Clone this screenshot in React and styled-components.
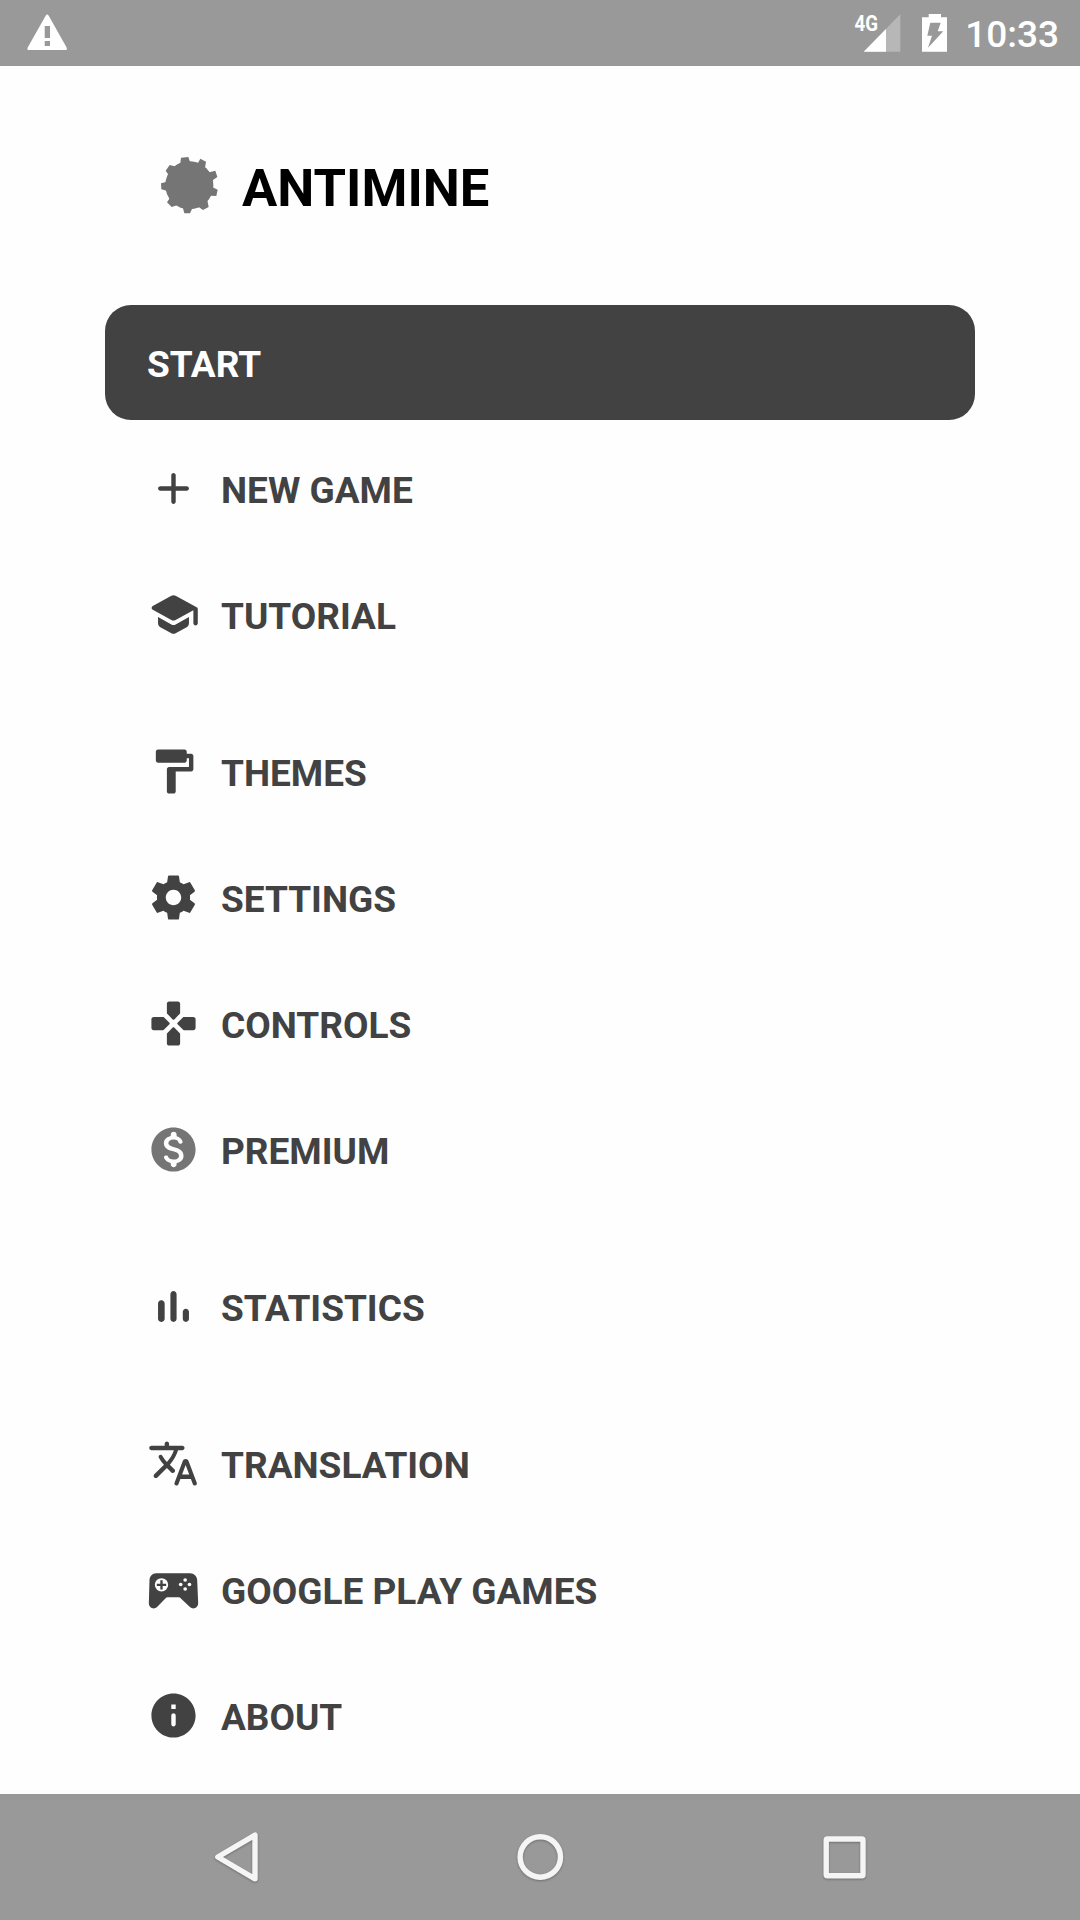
import React from "react";
import styled, { createGlobalStyle } from "styled-components";

const GlobalStyle = createGlobalStyle`
  * { box-sizing: border-box; }
  body { margin: 0; background: #fefefe; }
`;

const Screen = styled.div`
  width: 1080px;
  height: 1920px;
  display: flex;
  flex-direction: column;
  background: #fefefe;
  color: #424242;
  font-family: Roboto, "Noto Sans", sans-serif;
  overflow: hidden;
`;

const StatusBar = styled.header`
  flex: none;
  height: 66px;
  display: flex;
  align-items: center;
  padding: 0 21px 0 24px;
  background: #999;
  color: #fff;
`;

const StatusIcon = styled.svg`
  display: block;
  flex: none;
  height: 66px;
  width: ${(p) => p.$w}px;
  margin-left: ${(p) => p.$ml || 0}px;
`;

const Spacer = styled.div`
  flex: 1;
`;

const Clock = styled.time`
  width: 94px;
  margin-left: 15px;
  text-align: right;
  font-size: 37px;
  font-weight: 500;
  line-height: 66px;
  padding-top: 4px;
`;

const Main = styled.main`
  flex: 1;
  min-height: 0;
  padding: 0 105px;
`;

const Brand = styled.div`
  height: 233px;
  display: flex;
  align-items: center;
  padding: 3px 0 0 53px;
  gap: 21px;
`;

const BrandMark = styled.svg`
  display: block;
  width: 63px;
  height: 63px;
  margin-top: 2px;
  fill: #757575;
`;

const Title = styled.h1`
  margin: 8px 0 0;
  color: #000;
  font-size: 52.5px;
  line-height: 62px;
  font-weight: 700;
`;

const Group = styled.nav`
  display: flex;
  flex-direction: column;
  margin-bottom: 31px;
`;

const Row = styled.button`
  height: ${(p) => (p.$filled ? 115 : 126)}px;
  margin: ${(p) => (p.$filled ? "6px 0 5px" : "0")};
  padding: 0 42px;
  display: flex;
  align-items: center;
  gap: 21px;
  border: 0;
  border-radius: 26px;
  background: ${(p) => (p.$filled ? "#424242" : "transparent")};
  color: ${(p) => (p.$filled ? "#fff" : "#424242")};
  font: 700 37px/44px Roboto, "Noto Sans", sans-serif;
  text-align: left;
`;

const Glyph = styled.svg`
  display: block;
  flex: none;
  width: 53px;
  height: 53px;
  fill: ${(p) => p.$tint || "currentColor"};
`;

const Label = styled.span`
  padding-top: 5px;
  white-space: nowrap;
`;

const NavBar = styled.footer`
  flex: none;
  height: 126px;
  display: flex;
  justify-content: center;
  gap: 178px;
  background: #999;
`;

const NavIcon = styled.svg`
  display: block;
  width: 126px;
  height: 126px;
  fill: none;
  stroke: #f5f5f5;
  stroke-width: 5.4;
  stroke-linejoin: round;
  filter: drop-shadow(0 1.5px 1px rgba(0, 0, 0, 0.28));
`;

const paths = {
  add: "M18 13h-5v5c0 .55-.45 1-1 1s-1-.45-1-1v-5H6c-.55 0-1-.45-1-1s.45-1 1-1h5V6c0-.55.45-1 1-1s1 .45 1 1v5h5c.55 0 1 .45 1 1s-.45 1-1 1z",
  school:
    "M5 13.18v2.81c0 .73.4 1.41 1.04 1.76l5 2.73c.6.33 1.32.33 1.92 0l5-2.73c.64-.35 1.04-1.03 1.04-1.76v-2.81l-6.04 3.3c-.6.33-1.32.33-1.92 0L5 13.18zm6.04-9.66l-8.43 4.6c-.69.38-.69 1.38 0 1.76l8.43 4.6c.6.33 1.32.33 1.92 0L21 10.09V16c0 .55.45 1 1 1s1-.45 1-1V9.59c0-.37-.2-.7-.52-.88l-9.52-5.19c-.6-.32-1.32-.32-1.92 0z",
  paint:
    "M18 4V3c0-.55-.45-1-1-1H5c-.55 0-1 .45-1 1v4c0 .55.45 1 1 1h12c.55 0 1-.45 1-1V6h1v4h-9c-.55 0-1 .45-1 1v10c0 .55.45 1 1 1h2c.55 0 1-.45 1-1v-9h7c.55 0 1-.45 1-1V5c0-.55-.45-1-1-1h-2z",
  settings:
    "M19.43 12.98c.04-.32.07-.64.07-.98s-.03-.66-.07-.98l2.11-1.65c.19-.15.24-.42.12-.64l-2-3.46c-.12-.22-.39-.3-.61-.22l-2.49 1c-.52-.4-1.08-.73-1.69-.98l-.38-2.65C14.46 2.18 14.25 2 14 2h-4c-.25 0-.46.18-.49.42l-.38 2.65c-.61.25-1.17.59-1.69.98l-2.49-1c-.23-.09-.49 0-.61.22l-2 3.46c-.13.22-.07.49.12.64l2.11 1.65c-.04.32-.07.65-.07.98s.03.66.07.98l-2.11 1.65c-.19.15-.24.42-.12.64l2 3.46c.12.22.39.3.61.22l2.49-1c.52.4 1.08.73 1.69.98l.38 2.65c.03.24.24.42.49.42h4c.25 0 .46-.18.49-.42l.38-2.65c.61-.25 1.17-.59 1.69-.98l2.49 1c.23.09.49 0 .61-.22l2-3.46c.12-.22.07-.49-.12-.64l-2.11-1.65zM12 15.5c-1.93 0-3.5-1.57-3.5-3.5s1.57-3.5 3.5-3.5 3.5 1.57 3.5 3.5-1.57 3.5-3.5 3.5z",
  controls:
    "M15 7.29V3c0-.55-.45-1-1-1h-4c-.55 0-1 .45-1 1v4.29c0 .13.05.26.15.35l2.5 2.5c.2.2.51.2.71 0l2.5-2.5c.09-.09.14-.21.14-.35zM7.29 9H3c-.55 0-1 .45-1 1v4c0 .55.45 1 1 1h4.29c.13 0 .26-.05.35-.15l2.5-2.5c.2-.2.2-.51 0-.71l-2.5-2.5C7.55 9.05 7.43 9 7.29 9zM9 16.71V21c0 .55.45 1 1 1h4c.55 0 1-.45 1-1v-4.29c0-.13-.05-.26-.15-.35l-2.5-2.5c-.2-.2-.51-.2-.71 0l-2.5 2.5c-.09.09-.14.21-.14.35zm7.35-7.56l-2.5 2.5c-.2.2-.2.51 0 .71l2.5 2.5c.09.09.22.15.35.15H21c.55 0 1-.45 1-1v-4c0-.55-.45-1-1-1h-4.29c-.14 0-.27.05-.36.14z",
  coin: "M12 2C6.48 2 2 6.48 2 12s4.48 10 10 10 10-4.48 10-10S17.52 2 12 2zm1.41 16.09v.58c0 .73-.6 1.33-1.33 1.33h-.01c-.73 0-1.33-.6-1.33-1.33v-.6c-1.33-.28-2.51-1.01-3.01-2.24-.23-.55.2-1.16.8-1.16h.24c.37 0 .67.25.81.6.29.75 1.05 1.27 2.51 1.27 1.96 0 2.4-.98 2.4-1.59 0-.83-.44-1.61-2.67-2.14-2.48-.6-4.18-1.62-4.18-3.67 0-1.72 1.39-2.84 3.11-3.21v-.6c0-.73.6-1.33 1.33-1.33h.01c.73 0 1.33.6 1.33 1.33v.62c1.38.34 2.25 1.2 2.63 2.26.2.55-.22 1.13-.81 1.13h-.26c-.37 0-.67-.26-.77-.62-.23-.76-.86-1.25-2.12-1.25-1.5 0-2.4.68-2.4 1.64 0 .84.65 1.39 2.67 1.91s4.18 1.39 4.18 3.91c-.02 1.83-1.39 2.83-3.13 3.16z",
  chart:
    "M6.4 9.2h.2c.77 0 1.4.63 1.4 1.4v7c0 .77-.63 1.4-1.4 1.4h-.2c-.77 0-1.4-.63-1.4-1.4v-7c0-.77.63-1.4 1.4-1.4zM12 5c.77 0 1.4.63 1.4 1.4v11.2c0 .77-.63 1.4-1.4 1.4-.77 0-1.4-.63-1.4-1.4V6.4c0-.77.63-1.4 1.4-1.4zm5.6 8c.77 0 1.4.63 1.4 1.4v3.2c0 .77-.63 1.4-1.4 1.4-.77 0-1.4-.63-1.4-1.4v-3.2c0-.77.63-1.4 1.4-1.4z",
  translate:
    "M12.65 15.67c.14-.36.05-.77-.23-1.05l-2.09-2.06.03-.03c1.74-1.94 2.98-4.17 3.71-6.53h1.94c.54 0 .99-.45.99-.99v-.02c0-.54-.45-.99-.99-.99H10V3c0-.55-.45-1-1-1s-1 .45-1 1v1H1.99c-.54 0-.99.45-.99.99 0 .55.45.99.99.99h10.18C11.5 7.92 10.44 9.75 9 11.35c-.81-.89-1.49-1.86-2.06-2.88-.16-.29-.45-.47-.78-.47-.69 0-1.13.75-.79 1.35.63 1.13 1.4 2.21 2.3 3.21L3.3 16.87c-.4.39-.4 1.03 0 1.42.39.39 1.02.39 1.42 0L9 14l2.02 2.02c.51.51 1.38.32 1.63-.35zM17.5 10c-.6 0-1.14.37-1.35.94l-3.67 9.8c-.24.61.22 1.26.87 1.26.39 0 .74-.24.88-.61l.89-2.39h4.75l.9 2.39c.14.36.49.61.88.61.65 0 1.11-.65.88-1.26l-3.67-9.8c-.22-.57-.76-.94-1.36-.94zm-1.62 7l1.62-4.33L19.12 17h-3.24z",
  info: "M12 2C6.48 2 2 6.48 2 12s4.48 10 10 10 10-4.48 10-10S17.52 2 12 2zm0 15c-.55 0-1-.45-1-1v-4c0-.55.45-1 1-1s1 .45 1 1v4c0 .55-.45 1-1 1zm1-8h-2V7h2v2z",
};

const groups = [
  [
    { label: "START", filled: true },
    { label: "NEW GAME", icon: "add" },
    { label: "TUTORIAL", icon: "school" },
  ],
  [
    { label: "THEMES", icon: "paint" },
    { label: "SETTINGS", icon: "settings" },
    { label: "CONTROLS", icon: "controls" },
    { label: "PREMIUM", icon: "coin", tint: "#757575" },
  ],
  [{ label: "STATISTICS", icon: "chart" }],
  [
    { label: "TRANSLATION", icon: "translate" },
    { label: "GOOGLE PLAY GAMES", icon: "pad" },
    { label: "ABOUT", icon: "info" },
  ],
];

function GamePad() {
  return (
    <Glyph viewBox="52.5 428 159 159">
      <path d="M80 459h102c12 0 20 9 21 20l3 69c0 16-16 20-24 13l-27-26q-3-4-8-4h-32q-5 0-8 4l-25 26c-8 7-24 3-24-13l2-69c1-11 8-20 20-20z" />
      <circle cx="96" cy="493.5" r="20" fill="#fefefe" />
      <path d="M92.5 479.5h7V490H110v7H99.5v10.5h-7V497H82v-7h10.5z" />
      <g fill="#fefefe">
        <circle cx="167" cy="479" r="5.5" />
        <circle cx="167" cy="506" r="5.5" />
        <circle cx="153.5" cy="492.5" r="5.5" />
        <circle cx="180" cy="492.5" r="5.5" />
      </g>
    </Glyph>
  );
}

function Icon({ name, tint }) {
  if (name === "pad") return <GamePad />;
  return (
    <Glyph viewBox="0 0 24 24" $tint={tint}>
      <path d={paths[name]} />
    </Glyph>
  );
}

export default function App() {
  return (
    <Screen>
      <GlobalStyle />
      <StatusBar>
        <StatusIcon $w={46} viewBox="24 0 46 66">
          <path
            fill="#fff"
            fillRule="evenodd"
            d="M45.8 15.6q1.4-2 2.8 0L66.6 47.5q1.2 2.6-1.6 2.6H29.3q-2.8 0-1.6-2.6zM44.7 26v12h5.3V26zM44.7 41v5h5.3v-5z"
          />
        </StatusIcon>
        <Spacer />
        <StatusIcon $w={50} viewBox="852 0 50 66">
          <path d="M900.3 14.3v37.4h-36.6z" fill="#fff" fillOpacity=".3" />
          <path d="M886 29v22.7h-22.3z" fill="#fff" />
          <text
            x="854.5"
            y="31.4"
            fill="#fff"
            fontFamily="Roboto, sans-serif"
            fontWeight="700"
            fontSize="22"
            textLength="23.5"
            lengthAdjust="spacingAndGlyphs"
          >
            4G
          </text>
        </StatusIcon>
        <StatusIcon $w={30} $ml={18} viewBox="920 0 30 66">
          <path
            fill="#fff"
            fillRule="evenodd"
            d="M928.7 14h12.3v3.3h6v34.4h-25V17.3h6.7zM930.3 22.7l-3 13h4.7l-4 12L943.3 31.3h-5.6l3-8.6z"
          />
        </StatusIcon>
        <Clock>10:33</Clock>
      </StatusBar>
      <Main>
        <Brand>
          <BrandMark viewBox="54 43 189 189">
            <circle cx="148" cy="136.7" r="72" />
            <path d="M123 54L145 52L150 66A71 71 0 0 1 174 70L181 57L198 66L195 84A71 71 0 0 1 208 98L226 93L232 112L218 122A71 71 0 0 1 218 143L233 150L229 169L212 168A71 71 0 0 1 202 182L206 202L189 211L176 202A71 71 0 0 1 157 206L150 221L133 221L129 206A71 71 0 0 1 111 197L95 202L81 188L90 174A71 71 0 0 1 80 153L64 149L63 131L78 127A71 71 0 0 1 86 106L77 93L89 76L104 80A71 71 0 0 1 121 70Z" />
          </BrandMark>
          <Title>ANTIMINE</Title>
        </Brand>
        {groups.map((items, i) => (
          <Group key={i}>
            {items.map((it) => (
              <Row key={it.label} type="button" $filled={it.filled}>
                {it.icon && <Icon name={it.icon} tint={it.tint} />}
                <Label>{it.label}</Label>
              </Row>
            ))}
          </Group>
        ))}
      </Main>
      <NavBar>
        <NavIcon viewBox="173 1794 126 126">
          <path d="M255 1835.2v43.6L217.8 1857z" />
        </NavIcon>
        <NavIcon viewBox="477.3 1794 126 126">
          <circle cx="540.6" cy="1857" r="20.2" />
        </NavIcon>
        <NavIcon viewBox="781 1794 126 126">
          <rect x="826.2" y="1839" width="36.8" height="36.8" rx="1.2" />
        </NavIcon>
      </NavBar>
    </Screen>
  );
}
